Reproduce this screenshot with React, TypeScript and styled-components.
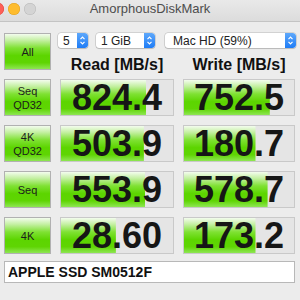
import React from 'react';
import styled, { createGlobalStyle } from 'styled-components';

const GlobalStyle = createGlobalStyle`
  html, body {
    margin: 0;
    padding: 0;
    background: #ececec;
  }
  body {
    font-family: "Liberation Sans", Arial, sans-serif;
    width: 300px;
    height: 300px;
    overflow: hidden;
  }
`;

const Window = styled.div`
  width: 300px;
  height: 300px;
  background: #ececec;
  overflow: hidden;
`;

const TitleBar = styled.div`
  height: 22px;
  display: grid;
  grid-template-columns: 1fr auto 1fr;
  align-items: center;
  background: linear-gradient(to bottom, #e9e9e9, #dcdcdc);
  border-bottom: 1px solid #c4c4c4;
  box-sizing: border-box;
`;

const Lights = styled.div`
  display: flex;
  gap: 4px;
  margin-left: -8px;
  margin-top: -4px;
`;

const Light = styled.span<{ $color: string; $edge: string }>`
  width: 12px;
  height: 12px;
  border-radius: 50%;
  background: ${(p) => p.$color};
  box-shadow: inset 0 0 0 0.5px ${(p) => p.$edge};
`;

const Title = styled.div`
  font-size: 13px;
  color: #4d4d4d;
  margin-top: -4px;
`;

const Content = styled.div`
  padding: 11px 5px 0 4px;
`;

const Grid = styled.div`
  display: grid;
  grid-template-columns: 47px 114px 112px;
  grid-auto-rows: 37px;
  column-gap: 9px;
  row-gap: 9px;
`;

const greenGradient = `linear-gradient(
  to bottom,
  #f3fcee 0%,
  #c4f0a2 18%,
  #7fe133 40%,
  #5cd500 62%,
  #5fd503 82%,
  #8ee653 100%
)`;

const TestButton = styled.div`
  box-sizing: border-box;
  border: 1px solid #b1b1b1;
  background: ${greenGradient};
  display: flex;
  flex-direction: column;
  align-items: center;
  justify-content: center;
  font-size: 11px;
  line-height: 14px;
  color: #1c1c1c;
`;

const HeaderArea = styled.div`
  grid-column: 2 / span 2;
  display: flex;
  flex-direction: column;
`;

const Controls = styled.div`
  display: flex;
  margin: 0 -1px 0 -2px;
  height: 15px;
`;

const Select = styled.div<{ $w: number; $gap: number }>`
  width: ${(p) => p.$w}px;
  margin-right: ${(p) => p.$gap}px;
  height: 15px;
  box-sizing: border-box;
  display: flex;
  align-items: center;
  background: #fff;
  border-radius: 3px;
  box-shadow: 0 0 0 0.5px rgba(0, 0, 0, 0.22), 0 1px 1px rgba(0, 0, 0, 0.12);
  font-size: 12px;
  color: #222;
  overflow: hidden;
`;

const SelectText = styled.span<{ $pad: number }>`
  flex: 1;
  padding-left: ${(p) => p.$pad}px;
  white-space: nowrap;
`;

const Stepper = styled.span`
  width: 11px;
  height: 15px;
  display: flex;
  align-items: center;
  justify-content: center;
  background: linear-gradient(to bottom, #5ea8fb, #1e7cf6);
  border-radius: 0 3px 3px 0;
`;

const Heads = styled.div`
  display: grid;
  grid-template-columns: 114px 112px;
  column-gap: 9px;
  margin-top: 11px;
`;

const Head = styled.div`
  text-align: center;
  font-size: 16px;
  font-weight: bold;
  line-height: 11px;
  color: #111;
  white-space: nowrap;
`;

const ValueBox = styled.div`
  box-sizing: border-box;
  border: 1px solid #c9c9c9;
  background-color: #e5e5e5;
  background-image: ${greenGradient};
  background-repeat: no-repeat;
  text-align: center;
  font-size: 36px;
  font-weight: bold;
  line-height: 35px;
  color: #161616;
`;

const NameField = styled.div`
  margin-top: 7px;
  height: 22px;
  width: 291px;
  box-sizing: border-box;
  background: #fff;
  border: 1px solid #b8b8b8;
  padding-left: 3px;
  font-size: 14px;
  font-weight: bold;
  line-height: 20px;
  color: #111;
`;

const Chevrons = () => (
  <svg width="9" height="13" viewBox="0 0 9 13">
    <path d="M2.5 5.2 L4.5 3.2 L6.5 5.2" stroke="#fff" strokeWidth="1.2" fill="none" />
    <path d="M2.5 7.8 L4.5 9.8 L6.5 7.8" stroke="#fff" strokeWidth="1.2" fill="none" />
  </svg>
);

const rows = [
  { label: ['Seq', 'QD32'], read: '824.4', readPct: 76, write: '752.5', writePct: 78 },
  { label: ['4K', 'QD32'], read: '503.9', readPct: 74, write: '180.7', writePct: 65 },
  { label: ['Seq'], read: '553.9', readPct: 75, write: '578.7', writePct: 76 },
  { label: ['4K'], read: '28.60', readPct: 49, write: '173.2', writePct: 65 },
];

export default function App() {
  return (
    <Window>
      <GlobalStyle />
      <TitleBar>
        <Lights>
          <Light $color="#fe5f57" $edge="#e0443e" />
          <Light $color="#febc2e" $edge="#dea123" />
          <Light $color="#d4d4d4" $edge="#b8b8b8" />
        </Lights>
        <Title>AmorphousDiskMark</Title>
        <span />
      </TitleBar>
      <Content>
        <Grid>
          <TestButton>All</TestButton>
          <HeaderArea>
            <Controls>
              <Select $w={30} $gap={8}>
                <SelectText $pad={5}>5</SelectText>
                <Stepper>
                  <Chevrons />
                </Stepper>
              </Select>
              <Select $w={59} $gap={10}>
                <SelectText $pad={5}>1 GiB</SelectText>
                <Stepper>
                  <Chevrons />
                </Stepper>
              </Select>
              <Select $w={131} $gap={0}>
                <SelectText $pad={8}>Mac HD (59%)</SelectText>
                <Stepper>
                  <Chevrons />
                </Stepper>
              </Select>
            </Controls>
            <Heads>
              <Head>Read [MB/s]</Head>
              <Head>Write [MB/s]</Head>
            </Heads>
          </HeaderArea>
          {rows.map((r) => (
            <React.Fragment key={r.label.join(' ') + r.read}>
              <TestButton>
                {r.label.map((l) => (
                  <span key={l}>{l}</span>
                ))}
              </TestButton>
              <ValueBox style={{ backgroundSize: `${r.readPct}% 100%` }}>{r.read}</ValueBox>
              <ValueBox style={{ backgroundSize: `${r.writePct}% 100%` }}>{r.write}</ValueBox>
            </React.Fragment>
          ))}
        </Grid>
        <NameField>APPLE SSD SM0512F</NameField>
      </Content>
    </Window>
  );
}
